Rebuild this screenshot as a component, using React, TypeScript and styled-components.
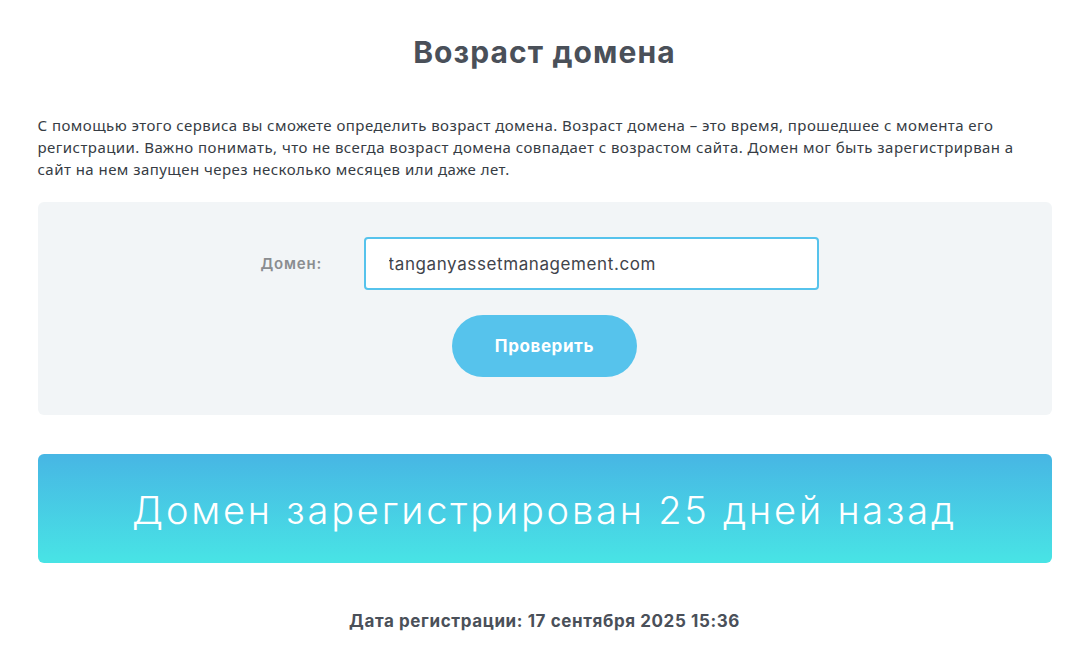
import styled, { createGlobalStyle } from 'styled-components';

const GlobalStyle = createGlobalStyle`
  html, body {
    margin: 0;
    padding: 0;
    background: #ffffff;
  }
  * {
    box-sizing: border-box;
  }
`;

const Page = styled.div`
  width: 1014px;
  margin: 0 auto;
  padding-top: 30px;
  font-family: 'Noto Sans', sans-serif;
`;

const Title = styled.h1`
  margin: 0;
  text-align: center;
  font-family: 'Inter', sans-serif;
  font-size: 30px;
  font-weight: 700;
  letter-spacing: 1.1px;
  line-height: 44px;
  color: #4a5059;
`;

const Intro = styled.p`
  margin: 40px 0 0;
  font-size: 15px;
  letter-spacing: 0.45px;
  line-height: 22px;
  color: #363c44;
`;

const FormPanel = styled.form`
  margin-top: 22px;
  padding: 35px 0 38px;
  background: #f2f5f7;
  border-radius: 6px;
  display: flex;
  flex-direction: column;
  align-items: center;
  gap: 25px;
`;

const FieldRow = styled.div`
  display: flex;
  align-items: center;
  margin-right: 10px;
`;

const Label = styled.label`
  width: 103px;
  font-family: 'Inter', sans-serif;
  font-size: 15px;
  font-weight: 600;
  letter-spacing: 0.8px;
  color: #8a8d90;
`;

const Input = styled.input`
  width: 455px;
  height: 53px;
  padding: 0 23px;
  border: 2px solid #56c3ec;
  border-radius: 4px;
  background: #ffffff;
  font-family: 'Inter', sans-serif;
  font-size: 17px;
  letter-spacing: 0.6px;
  color: #3f444b;
  outline: none;
`;

const Button = styled.button`
  width: 185px;
  height: 62px;
  border: none;
  border-radius: 31px;
  background: #56c3ec;
  color: #ffffff;
  font-family: 'Inter', sans-serif;
  font-size: 17px;
  font-weight: 700;
  letter-spacing: 0.6px;
  cursor: pointer;
`;

const Result = styled.div`
  margin-top: 39px;
  height: 109px;
  padding-top: 3px;
  border-radius: 6px;
  background: linear-gradient(to bottom, #47b6e4, #48e4e5);
  display: flex;
  align-items: center;
  justify-content: center;
  font-family: 'Inter', sans-serif;
  font-size: 38px;
  font-weight: 300;
  letter-spacing: 2.8px;
  color: #ffffff;
`;

const RegDate = styled.div`
  margin-top: 48px;
  text-align: center;
  font-family: 'Inter', sans-serif;
  font-size: 17px;
  font-weight: 700;
  letter-spacing: 0.6px;
  color: #4a5059;
`;

export default function App() {
  return (
    <>
      <GlobalStyle />
      <Page>
        <Title>Возраст домена</Title>
        <Intro>
          С помощью этого сервиса вы сможете определить возраст домена. Возраст домена – это время,
          прошедшее с момента его регистрации. Важно понимать, что не всегда возраст домена совпадает с
          возрастом сайта. Домен мог быть зарегистрирван а сайт на нем запущен через несколько месяцев
          или даже лет.
        </Intro>
        <FormPanel onSubmit={(e) => e.preventDefault()}>
          <FieldRow>
            <Label htmlFor="domain">Домен:</Label>
            <Input id="domain" defaultValue="tanganyassetmanagement.com" />
          </FieldRow>
          <Button type="submit">Проверить</Button>
        </FormPanel>
        <Result>Домен зарегистрирован 25 дней назад</Result>
        <RegDate>Дата регистрации: 17 сентября 2025 15:36</RegDate>
      </Page>
    </>
  );
}
